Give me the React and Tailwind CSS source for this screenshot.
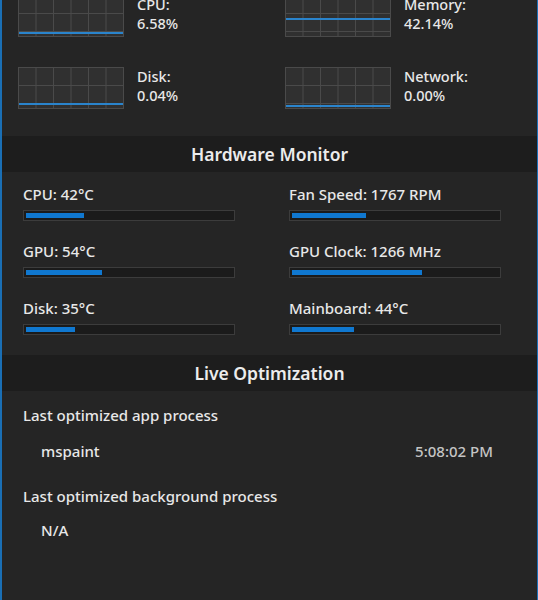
const font = { fontFamily: '"Segoe UI", "Noto Sans", "Open Sans", sans-serif' };

const usage = [
  { label: 'CPU:', value: '6.58%', line: 38 },
  { label: 'Memory:', value: '42.14%', line: 24 },
  { label: 'Disk:', value: '0.04%', line: 37 },
  { label: 'Network:', value: '0.00%', line: 39 },
];

const sensors = [
  { label: 'CPU: 42°C', pct: 28 },
  { label: 'Fan Speed: 1767 RPM', pct: 36 },
  { label: 'GPU: 54°C', pct: 37 },
  { label: 'GPU Clock: 1266 MHz', pct: 63 },
  { label: 'Disk: 35°C', pct: 24 },
  { label: 'Mainboard: 44°C', pct: 30 },
];

// small usage graph, drawn like the task manager grids
function Graph({ line }) {
  const cols = [0, 17.5, 35, 52.5, 70, 87.5, 105];
  return (
    <svg width="106" height="42" viewBox="0 0 106 42" className="shrink-0">
      <rect x="0.5" y="0.5" width="105" height="41" fill="#303030" stroke="#4a4a4a" />
      {cols.map((x) => (
        <line key={x} x1={x + 0.5} y1="0" x2={x + 0.5} y2="42" stroke="#4a4a4a" />
      ))}
      <line x1="0" y1="18.5" x2="106" y2="18.5" stroke="#4a4a4a" />
      <line x1="0" y1="36.5" x2="106" y2="36.5" stroke="#4a4a4a" />
      <line x1="1" y1={line} x2="105" y2={line} stroke="#2a84cc" strokeWidth="2" />
    </svg>
  );
}

function Band({ title }) {
  return (
    <div className="h-[36px] bg-[#1d1d1d] flex items-center justify-center text-[17.5px] font-semibold text-[#ececec]">
      {title}
    </div>
  );
}

export default function App() {
  return (
    <div style={font} className="w-[538px] h-[600px] overflow-hidden bg-[#252525] border-l-2 border-r border-[#1a6fb5] text-[#e8e8e8] text-[15px] font-medium">
      <div className="grid grid-cols-[267px_267px] gap-y-[30px] pl-[16px] mt-[-5px] pb-[27px]">
        {usage.map((u) => (
          <div key={u.label} className="flex gap-[13px]">
            <Graph line={u.line} />
            <div className="leading-[19px] text-[14.5px]">
              <div>{u.label}</div>
              <div>{u.value}</div>
            </div>
          </div>
        ))}
      </div>

      <Band title="Hardware Monitor" />
      <div className="grid grid-cols-[266px_266px] gap-y-[20px] pl-[21px] pt-[12px] pb-[20px]">
        {sensors.map((s) => (
          <div key={s.label}>
            <div className="leading-[20px]">{s.label}</div>
            <div className="mt-[6px] w-[212px] h-[11px] border border-[#3c3c3c] bg-[#1b1b1b] p-[2px]">
              <div className="h-full bg-[#1078d0]" style={{ width: `${s.pct}%` }} />
            </div>
          </div>
        ))}
      </div>

      <Band title="Live Optimization" />
      <div className="pl-[21px] pr-[44px] pt-[14px] leading-[20px]">
        <div>Last optimized app process</div>
        <div className="flex justify-between pl-[18px] mt-[16px]">
          <span>mspaint</span>
          <span className="text-[#c4c4c4]">5:08:02 PM</span>
        </div>
        <div className="mt-[25px]">Last optimized background process</div>
        <div className="pl-[18px] mt-[14px]">N/A</div>
      </div>
    </div>
  );
}
